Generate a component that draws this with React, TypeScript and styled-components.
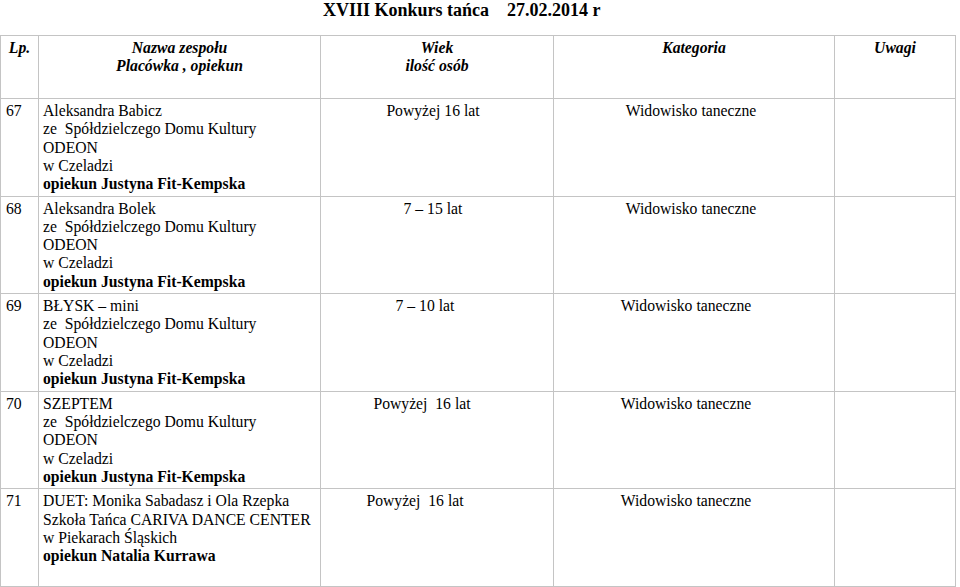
import React from 'react';
import styled, { createGlobalStyle } from 'styled-components';

const GlobalStyle = createGlobalStyle`
  html, body {
    margin: 0;
    padding: 0;
    background: #fff;
  }
  body {
    font-family: 'Liberation Serif', 'Times New Roman', serif;
    color: #000;
  }
`;

interface IEntry {
  lp: number;
  lines: string[];
  opiekun: string;
  wiek: string;
  wiekShift: number;
  kategoria: string;
  katShift: number;
}

const ODEON = ['ze  Spółdzielczego Domu Kultury', 'ODEON', 'w Czeladzi'];

const entries: IEntry[] = [
  {
    lp: 67,
    lines: ['Aleksandra Babicz', ...ODEON],
    opiekun: 'opiekun Justyna Fit-Kempska',
    wiek: 'Powyżej 16 lat',
    wiekShift: 4,
    kategoria: 'Widowisko taneczne',
    katShift: 3,
  },
  {
    lp: 68,
    lines: ['Aleksandra Bolek', ...ODEON],
    opiekun: 'opiekun Justyna Fit-Kempska',
    wiek: '7 – 15 lat',
    wiekShift: 4,
    kategoria: 'Widowisko taneczne',
    katShift: 3,
  },
  {
    lp: 69,
    lines: ['BŁYSK – mini', ...ODEON],
    opiekun: 'opiekun Justyna Fit-Kempska',
    wiek: '7 – 10 lat',
    wiekShift: 12,
    kategoria: 'Widowisko taneczne',
    katShift: 8,
  },
  {
    lp: 70,
    lines: ['SZEPTEM', ...ODEON],
    opiekun: 'opiekun Justyna Fit-Kempska',
    wiek: 'Powyżej  16 lat',
    wiekShift: 15,
    kategoria: 'Widowisko taneczne',
    katShift: 8,
  },
  {
    lp: 71,
    lines: ['DUET: Monika Sabadasz i Ola Rzepka', 'Szkoła Tańca CARIVA DANCE CENTER', 'w Piekarach Śląskich'],
    opiekun: 'opiekun Natalia Kurrawa',
    wiek: 'Powyżej  16 lat',
    wiekShift: 22,
    kategoria: 'Widowisko taneczne',
    katShift: 8,
  },
];

const columns = [38, 282, 233, 281, 121];

export default function App() {
  return (
    <Page>
      <GlobalStyle />
      <Title>{'XVIII Konkurs tańca    27.02.2014 r'}</Title>
      <Sheet>
        <colgroup>
          {columns.map((w, i) => (
            <col key={i} style={{ width: w }} />
          ))}
        </colgroup>
        <thead>
          <HeadRow>
            <HeadCell>Lp.</HeadCell>
            <HeadCell>
              Nazwa zespołu
              <br />
              Placówka , opiekun
            </HeadCell>
            <HeadCell>
              Wiek
              <br />
              ilość osób
            </HeadCell>
            <HeadCell>Kategoria</HeadCell>
            <HeadCell>Uwagi</HeadCell>
          </HeadRow>
        </thead>
        <tbody>
          {entries.map((e) => (
            <EntryRow key={e.lp}>
              <NumberCell>{e.lp}</NumberCell>
              <NameCell>
                {e.lines.map((l) => (
                  <Line key={l}>{l}</Line>
                ))}
                <Guardian>{e.opiekun}</Guardian>
              </NameCell>
              <CenterCell $shift={e.wiekShift}>{e.wiek}</CenterCell>
              <CenterCell $shift={e.katShift}>{e.kategoria}</CenterCell>
              <Cell />
            </EntryRow>
          ))}
        </tbody>
      </Sheet>
    </Page>
  );
}

const Page = styled.div`
  width: 960px;
  height: 587px;
  overflow: hidden;
`;

const Title = styled.h1`
  margin: 0;
  height: 35px;
  padding-left: 323px;
  font-size: 18px;
  line-height: 20px;
  font-weight: bold;
  white-space: pre;
`;

const Sheet = styled.table`
  border-collapse: collapse;
  table-layout: fixed;
  width: 955px;
  font-size: 15.7px;
  line-height: 18.3px;
`;

const HeadRow = styled.tr`
  height: 63px;
`;

const EntryRow = styled.tr`
  height: 97.6px;
`;

const Cell = styled.td`
  border: 1px solid #c4c4c4;
  padding: 3px 0 0;
  vertical-align: top;
`;

const HeadCell = styled.th`
  border: 1px solid #c4c4c4;
  padding: 3px 0 0;
  vertical-align: top;
  text-align: center;
  font-weight: bold;
  font-style: italic;
`;

const NumberCell = styled(Cell)`
  padding-left: 5px;
`;

const NameCell = styled(Cell)`
  padding-left: 4px;
`;

const CenterCell = styled(Cell)<{ $shift: number }>`
  text-align: center;
  white-space: pre;
  padding-right: ${(p) => p.$shift * 2}px;
`;

const Line = styled.div`
  white-space: pre;
`;

const Guardian = styled.div`
  font-weight: bold;
  white-space: pre;
`;
